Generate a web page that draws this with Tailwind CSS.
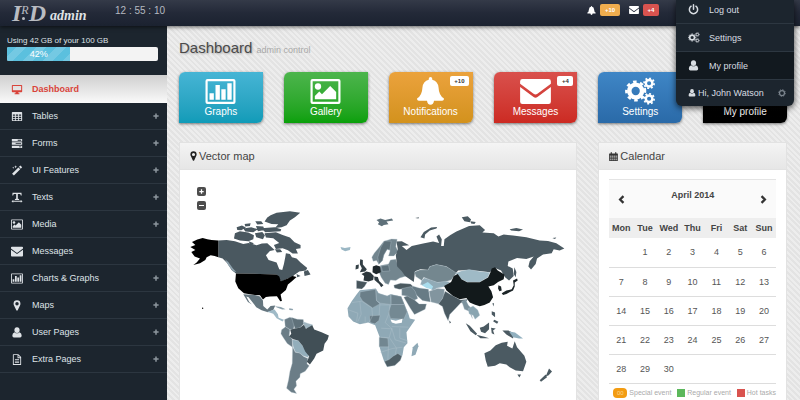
<!DOCTYPE html>
<html lang="en">
<head>
  <meta charset="UTF-8" />
  <meta name="viewport" content="width=device-width, initial-scale=1.0"/>
  <title>IRD admin - Dashboard</title>
  <script src="https://cdn.jsdelivr.net/npm/@tailwindcss/browser@4"></script>
</head>
<body class="h-screen flex flex-col overflow-hidden bg-[#1c252e] font-['Liberation_Sans',Arial,sans-serif] text-[9px] leading-3">

  <!-- icon sprite -->
  <svg class="hidden">
    <symbol id="i-desktop" viewBox="0 0 16 16"><path fill-rule="evenodd" d="M1.500 1.500h13q1 0 1 1v8.500q0 1-1 1H10v1.500h1.500V15h-7v-1.500H6V12H1.500q-1 0-1-1V2.500q0-1 1-1zM2 3v6h12V3z"/></symbol>
    <symbol id="i-table" viewBox="0 0 16 16"><path fill-rule="evenodd" d="M1.500 1.500h13q1 0 1 1v11q0 1-1 1h-13q-1 0-1-1v-11q0-1 1-1zM2 5v2h3V5zM6.300 5v2h3.400V5zM11 5v2h3V5zM2 8.200v2h3v-2zM6.300 8.200v2h3.400v-2zM11 8.200v2h3v-2zM2 11.300v2h3v-2zM6.300 11.300v2h3.400v-2zM11 11.300v2h3v-2z"/></symbol>
    <symbol id="i-tasks" viewBox="0 0 16 16"><path fill-rule="evenodd" d="M.5 1.500h15v3.600H.5zM9 2.700v1.200h5V2.700zM.5 6.300h15v3.600H.5zM6 7.500v1.200h8V7.500zM.5 11.100h15v3.600H.5zM11 12.300v1.200h3v-1.200z"/></symbol>
    <symbol id="i-magic" viewBox="0 0 16 16"><path d="M.8 12.700L10 3.500l2.700 2.700-9.200 9.200zM10.900 2.700L13 .7l2.500 2.500-2 2.200zM6 .5l.6 1.500 1.500.5-1.500.6L6 4.600l-.6-1.500L4 2.500 5.400 2zM2.500 2.500l.5 1 1 .5-1 .5-.5 1-.5-1-1-.5 1-.5z"/></symbol>
    <symbol id="i-text" viewBox="0 0 16 16"><path d="M1.500 1h13l.3 4h-1.200l-.9-2H9.200v6.800l1.800.5V11.500H5v-1.200l1.800-.5V3H3.300l-.9 2H1.200zM0 13.500L2.500 11.500v1.300h11v-1.300L16 13.500 13.500 15.500v-1.200h-11v1.200z"/></symbol>
    <symbol id="i-picture" viewBox="0 0 18 15"><path fill-rule="evenodd" d="M1.200 0h15.600Q18 0 18 1.200v12.600q0 1.200-1.200 1.200H1.200Q0 15 0 13.800V1.200Q0 0 1.200 0zM1.300 1.300v12.400h15.400V1.300z"/><circle cx="4.500" cy="4.500" r="1.900"/><path d="M2.600 12.200v-2l2.700-2.700 1.600 1.600L11.800 4.200l3.600 3.600v4.400z"/></symbol>
    <symbol id="i-envelope" viewBox="0 0 16 13"><path d="M0 2.500V1.200Q0 0 1.200 0h13.600Q16 0 16 1.200v1.300L9 7.700q-1 .8-2 0z"/><path d="M0 4.200L7 9.300q1 .8 2 0l7-5.100v7.600q0 1.200-1.200 1.200H1.200Q0 13 0 11.800z"/></symbol>
    <symbol id="i-chart" viewBox="0 0 18 15"><path fill-rule="evenodd" d="M1.200 0h15.600Q18 0 18 1.200v12.600q0 1.200-1.200 1.200H1.200Q0 15 0 13.800V1.200Q0 0 1.200 0zM1.300 1.300v12.400h15.400V1.300z"/><path d="M2.400 8.600h2.600v3.800H2.400zM6 3.600h2.600v8.800H6zM9.500 6.100h2.600v6.300H9.500zM13.100 2.600h2.600v9.800h-2.600z"/></symbol>
    <symbol id="i-marker" viewBox="0 0 11 16"><path fill-rule="evenodd" d="M5.500.5a5 5 0 0 1 5 5q0 1-.5 2L6.500 15q-1 1.200-2 0L1 7.500Q.5 6.500.5 5.500a5 5 0 0 1 5-5zM5.500 3a2.500 2.500 0 1 0 0 5 2.500 2.500 0 0 0 0-5z"/></symbol>
    <symbol id="i-user" viewBox="0 0 16 16"><ellipse cx="8" cy="4.500" rx="3.800" ry="4.300"/><path d="M4.500 7.500Q8 11 11.500 7.500q3.300.8 3.300 5 0 2.700-2.300 2.700h-9q-2.300 0-2.300-2.700 0-4.200 3.300-5z"/></symbol>
    <symbol id="i-file" viewBox="0 0 16 16"><path fill-rule="evenodd" d="M2 1q0-.8.8-.8H10L14 4.500v10.700q0 .8-.8.8H2.800q-.8 0-.8-.8zM3.300 1.500v13.200h9.400V6H8.800V1.500zM10 2v2.800h2.500zM5 7.500h6v1.100H5zM5 9.800h6v1.100H5zM5 12h6v1.100H5z"/></symbol>
    <symbol id="i-plus" viewBox="0 0 16 16"><path d="M6 1h4v5h5v4h-5v5H6v-5H1V6h5z"/></symbol>
    <symbol id="i-bell" viewBox="0 0 16 16"><path d="M8 0q1 0 1 1v.5q3.300.8 3.600 4.500.2 4.500 3 6.200.3 1.300-1 1.300h-4.600Q9.700 15.800 8 15.800T6 13.500H1.400q-1.300 0-1-1.300 2.800-1.700 3-6.200Q3.700 2.300 7 1.500V1q0-1 1-1z"/></symbol>
    <symbol id="i-cogs" viewBox="0 0 18 16">
      <g fill="none" stroke="currentColor">
        <circle cx="6.200" cy="8" r="3.700" stroke-width="2.600"/>
        <circle cx="6.200" cy="8" r="5.400" stroke-width="1.500" pathLength="16" stroke-dasharray="1 1" stroke-dashoffset=".5"/>
        <circle cx="14" cy="3.500" r="1.900" stroke-width="1.400"/>
        <circle cx="14" cy="3.500" r="2.900" stroke-width="1" pathLength="16" stroke-dasharray="1 1"/>
        <circle cx="14" cy="12.500" r="1.900" stroke-width="1.400"/>
        <circle cx="14" cy="12.500" r="2.900" stroke-width="1" pathLength="16" stroke-dasharray="1 1"/>
      </g>
    </symbol>
    <symbol id="i-power" viewBox="0 0 16 16"><path fill="none" stroke="currentColor" stroke-width="2.200" stroke-linecap="round" d="M4.500 3.200a6 6 0 1 0 7 0M8 1.200v6.300"/></symbol>
    <symbol id="i-calendar" viewBox="0 0 16 16"><path fill-rule="evenodd" d="M1 2.500h2V1q0-1 1-1t1 1v1.500h6V1q0-1 1-1t1 1v1.500h2q.8 0 .8.800v11.900q0 .8-.8.800H1q-.8 0-.8-.8V3.300q0-.8.800-.8z"/><path fill="#999" d="M1.500 6.300v2.400h2.700V6.300zM5 6.300v2.400h2.700V6.300zM8.500 6.300v2.400h2.700V6.300zM12 6.300v2.400h2.700V6.300zM1.500 9.400v2.300h2.700V9.400zM5 9.400v2.300h2.700V9.400zM8.500 9.400v2.300h2.700V9.400zM12 9.400v2.300h2.700V9.400zM1.500 12.400v2.300h2.700v-2.300zM5 12.400v2.300h2.700v-2.300zM8.500 12.400v2.300h2.700v-2.300zM12 12.400v2.300h2.700v-2.300z"/></symbol>
    <symbol id="i-left" viewBox="0 0 16 16"><path fill="none" stroke="currentColor" stroke-width="4" d="M11.500 2L5.500 8l6 6"/></symbol>
    <symbol id="i-right" viewBox="0 0 16 16"><path fill="none" stroke="currentColor" stroke-width="4" d="M4.500 2l6 6-6 6"/></symbol>
    <symbol id="i-cog" viewBox="0 0 16 16"><g fill="none" stroke="currentColor"><circle cx="8" cy="8" r="5" stroke-width="2.500"/><circle cx="8" cy="8" r="6.700" stroke-width="1.800" pathLength="16" stroke-dasharray="1 1"/></g></symbol>
  </svg>

  <header class="relative z-10 h-[26px] shrink-0 flex items-center bg-linear-to-b from-[#343a48] via-[#232938] to-[#1b2230] shadow-[0_1px_4px_rgba(0,0,0,0.6)]">
    <a href="#" class="w-[115px] pl-3 flex items-end font-['Liberation_Serif',serif] italic text-[#b9bcc2]" aria-label="IRD admin">
      <span class="text-[24px] leading-[26px] font-bold">I</span>
      <span class="flex flex-col items-center text-[12px] leading-[14px]">
        <span>R</span>
        <span class="size-[3px] mb-[6px] mr-1 rounded-full bg-current"></span>
      </span>
      <span class="text-[24px] leading-[26px] font-bold">D</span>
      <span class="text-[14px] leading-[20px] pl-1 font-bold text-[#dfe1e5]">admin</span>
    </a>
    <time class="text-[10px] pb-1 text-[#b5b9c0]">12 : 55 : 10</time>
    <div class="ml-auto mr-[141px] pb-1.5 flex items-center text-white">
      <svg class="size-[9px] fill-current"><use href="#i-bell"/></svg>
      <a href="#" class="ml-1 px-1 h-3 w-5 text-center rounded-xs bg-[#f0ad4e] text-[6px] font-bold">+10</a>
      <svg class="ml-[9px] h-2 w-[10px] fill-current"><use href="#i-envelope"/></svg>
      <a href="#" class="ml-1 h-3 w-4 text-center rounded-xs bg-[#d9534f] text-[6px] font-bold">+4</a>
    </div>

    <!-- user dropdown -->
    <nav class="absolute right-1.5 top-0 w-[118px] rounded-b-md bg-[#1c252e] text-[#d8dde2] shadow-[0_2px_6px_rgba(0,0,0,0.7)]">
      <a href="#" class="flex items-center h-6 pl-3 pb-1 border-b border-[#2d3741]"><svg class="size-[11px] mr-[10px] fill-current"><use href="#i-power"/></svg>Log out</a>
      <a href="#" class="flex items-center h-7 pl-3 border-b border-[#2d3741]"><svg class="h-[11px] w-3 mr-[9px] fill-current"><use href="#i-cogs"/></svg>Settings</a>
      <a href="#" class="flex items-center h-7 pl-3 bg-[#12191f] border-b border-[#2d3741]"><svg class="size-[11px] mr-[10px] fill-current"><use href="#i-user"/></svg>My profile</a>
      <a href="#" class="flex items-center h-[26px] px-3 pr-2"><svg class="size-2 mr-0.5 fill-current"><use href="#i-user"/></svg>Hi, John Watson<svg class="size-2 ml-auto text-[#7d868f]"><use href="#i-cog"/></svg></a>
    </nav>
  </header>

  <div class="flex flex-1 min-h-0">
    <aside class="w-[167px] shrink-0 text-[#dfe3e7]">
      <div class="px-[7px] pt-[9px] pb-[14px]">
        <label for="disk" class="block text-[8px]">Using 42 GB of your 100 GB</label>
        <div id="disk" role="progressbar" aria-valuenow="42" class="h-[14px] rounded-xs mr-0.5 bg-[#f3f3f3] overflow-hidden">
          <div class="h-full text-center text-white leading-[14px] bg-[#5bc0de] bg-[repeating-linear-gradient(135deg,#5bc0de_0_7px,#74c9e3_7px_14px)]" style="width:42%">42%</div>
        </div>
      </div>
      <nav id="menu"></nav>
    </aside>

    <main class="flex-1 min-w-0 px-3 pr-[13px] pt-[13px] flex flex-col bg-[repeating-linear-gradient(45deg,#e3e3e3_0_2px,#ededed_2px_4px)]">
      <h1 class="text-[15px] leading-[18px] text-[#4a4a4a] [text-shadow:1px_1px_2px_#aaa]">Dashboard <small class="text-[9px] text-[#a8a8a8] [text-shadow:none]">admin control</small></h1>

      <div class="mt-[13px] grid grid-cols-6 gap-x-[21px] text-[10px] text-white" id="tiles"></div>

      <div class="mt-[19px] flex-1 min-h-0 grid grid-cols-6 gap-x-[21px]">
        <section class="col-span-4 flex flex-col bg-white border border-[#e2e2e2]">
          <h2 class="h-[27px] shrink-0 px-[10px] flex items-center gap-0.5 text-[11px] text-[#444] bg-linear-to-b from-[#f4f4f4] to-[#e6e6e6] border-b border-[#e2e2e2]"><svg class="h-[10px] w-[7px] fill-[#222]"><use href="#i-marker"/></svg>Vector map</h2>
          <div class="relative flex-1">
            <div class="absolute left-[17px] top-[17px] flex flex-col gap-[5px] text-white">
              <button aria-label="Zoom in" class="size-[9px] rounded-xs bg-[#4d4d4d] flex items-center justify-center"><svg class="size-[5px] fill-current"><use href="#i-plus"/></svg></button>
              <button aria-label="Zoom out" class="size-[9px] rounded-xs bg-[#4d4d4d] flex items-center justify-center"><span class="w-[5px] h-px bg-white"></span></button>
            </div>
            <svg class="block w-full" viewBox="0 0 1190 690" role="img" aria-label="World map" stroke="#b9c8d0" stroke-width="1" stroke-linejoin="round">
              <!-- North America -->
              <g fill="#4a5860" stroke="none">
                <path d="M115 212L140 210 165 214 190 222 206 219 230 226 246 221 262 220 272 229 284 240 270 243 258 256 266 270 290 278 298 298 307 300 312 282 316 262 318 250 330 252 336 262 350 266 362 278 382 294 378 302 358 305 342 316 338 322 325 325 304 335 290 314 240 312 168 311 155 300 142 280 128 266 115 262z"/>
                <path d="M272 136L290 128 330 124 361 128 345 142 330 152 320 166 305 172 285 174 295 163 275 162 254 155 262 143z"/>
                <path d="M165 190L180 184 205 188 222 196 220 208 205 214 180 212 162 206zM170 172l16-5 12 6-14 8-12-1zM194 162l18-2-2 8-14 2zM190 176l24-4 20 6-14 9-24-2zM226 154l18 0 6 8-18 2zM228 168l22 2 4 10-20 4zM225 190l22-4 8 10-6 12-20-6zM244 175l40-3 20 6-2 6-46 3zM254 190l34-3 20 8 22 8 14 14 18 8 0 10-14 2 6 14-16 0-14-10-16-6-20 2-6-12 16-6-18-14-22-2zM206 214l16 6-10 6zM285 238l16 0 6 8-16 2zM372 305l12-5 8 14-18 4zM350 312l12 6-10 4z"/>
                <path d="M190 373L225 375 240 380 249 392 250 408 262 419 272 408 286 407 280 420 264 427 245 421 229 412 220 400 206 382 199 380 208 396 216 404 204 396z" fill="#65767f"/>
                <path d="M135 268l10 8 14 20 10 10-10-2-14-18z" fill="#8fa3ae"/>
                <path d="M262 426L284 419 294 433 296 444 312 450 308 455 290 445 280 432z" fill="#9fbac7"/>
                <path d="M285 409l18 2 14 7-10 1-16-6zM328 415l12 2-2 4-10-1z" fill="#8da2ad"/>
              </g>
              <path fill="#000" stroke="none" d="M115 212L95 210 82 208 68 204 52 209 36 216 46 225 31 231 46 240 34 246 44 260 60 266 50 278 40 285 60 280 76 270 80 262 92 256 104 258 115 262zM168 311L240 312 290 314 298 320 303 334 325 325 338 318 350 321 336 334 324 344 318 360 302 374 306 393 301 394 291 379 270 380 258 381 249 389 240 376 225 375 205 372 192 370 175 355 166 335z"/>
              <circle cx="68" cy="415" r="2" fill="#000" stroke="none"/>
              <!-- South America -->
              <g fill="#6b7d87">
                <path d="M314 449L330 442 342 447 345 460 340 480 328 478 316 470z"/>
                <path d="M335 443L352 448 370 449 372 462 360 474 345 476 340 460z" fill="#5f717a"/>
                <path d="M370 456L385 461 398 465 394 476 375 474z" fill="#9fb5c0"/>
                <path d="M305 480L317 471 330 480 328 497 337 508 338 532 322 521 310 503 303 492z"/>
                <path d="M337 510L355 512 368 528 384 550 386 563 370 558 360 550 346 546 340 530z" fill="#93aebb"/>
                <path d="M338 531L346 547 360 550 371 560 384 566 381 582 388 588 376 604 361 612 360 622 348 634 350 648 342 658 350 671 334 667 320 655 326 630 330 605 337 580z"/>
                <path d="M331 480L345 476 360 474 372 465 378 477 397 466 403 479 425 487 447 497 443 510 434 522 430 542 410 552 403 566 390 584 381 576 388 560 376 545 368 528 355 512 340 508 328 500 334 492z" fill="#414f56" stroke="none"/>
              </g>
              <!-- Europe -->
              <g fill="#73868f">
                <path d="M482 231L495 234 512 231 510 240 496 244 485 239z" fill="#9bb7c4" stroke="none"/>
                <path d="M590 150l12-4 14 4 20-4 4 6-20 3 6 8-14 2-6 4-12-6 4-6z" fill="#5f717a" stroke="none"/>
                <path d="M576 262L583 250 598 232 612 214 635 207 652 208 648 230 655 245 642 258 626 258 631 242 622 238 612 255 608 272 597 283 590 272 580 274z"/>
                <path d="M614 213L634 214 630 240 622 238 612 255 608 272 597 283 594 262 603 232z" fill="#5e7079"/>
                <path d="M541 268l8 2 0 14 12 14-5 7-16 2 6-12-6-12zM528 286l9-2-1 12-9 3z" fill="#333f45" stroke="none"/>
                <path d="M602 287L626 282 632 270 648 268 655 290 678 305 680 318 660 324 648 332 632 330 626 344 616 340 604 322 598 308z"/>
                <path d="M604 288l22-3 4 18-22 2z" fill="#5f727c"/>
                <path d="M545 312L560 305 572 308 582 318 580 330 566 335 551 332 553 318z" fill="#2c373c" stroke="none"/>
                <path d="M579 290l10-4 12 4 2 17-14 6-11-6z" fill="#1e272b" stroke="none"/>
                <path d="M530 332L562 337 554 350 546 357 530 356z" fill="#47555c"/>
                <path d="M583 320l11 1 4 12 13 13-7 6-6-10-14-12z" fill="#303c42" stroke="none"/>
                <path d="M642 346l20-6 30 2 8 8-12 6-30 2-14-4z" fill="#4a5960"/>
              </g>
              <!-- Africa -->
              <g fill="#8fa9b6">
                <path d="M515 395L530 374 540 361 588 356 596 370 622 378 632 373 664 380 672 400 685 430 690 446 706 450 692 470 680 487 683 520 672 532 668 556 645 585 622 591 612 572 604 548 599 530 602 508 592 482 586 466 565 458 540 463 520 455 506 440 503 415z" stroke="none"/>
                <path d="M541 366L588 358 590 392 600 402 578 414 548 393 540 380z" fill="#6b7f89"/>
                <path d="M588 358l8 12 26 8 10-4 2 30-32-4-12-8z" fill="#8097a2"/>
                <path d="M634 374l30 6 10 24-40 0z" fill="#6f838d"/>
                <path d="M634 404l40 0 8 22-10 22-40-2-6-20z" fill="#748993"/>
                <path d="M569 438l32-2-4 16-12 10-14-4z" fill="#677a84"/>
                <path d="M598 502l26 3 2 26-28 0z" fill="#728791"/>
                <path d="M614 575l14-6 12-10 14-8 12 8-4 12-17 16-23 4z" fill="#4f5f67"/>
                <path d="M600 405l30 0-2 25-12 28 20 18-8 28-25-2M516 398l30-4 30 20 2 24-10 20M530 455l4-25-28-10M540 395l4 38-10 22M600 402l-2 34M556 440l0 22M636 470l50 2M636 476l10 34 34 10M630 505l20 30-4 20M600 548l38-12 30-4M660 475l0 30 24 8M626 530l-2 40M604 475l34 2" fill="none"/>
                <path d="M632 449l16 4 20-6-2 12-18 3-12-4z" fill="#fff" stroke="none"/>
                <path d="M699 532l14-13 3 10-9 26-12 4z" stroke="none"/>
              </g>
              <!-- Asia and Oceania -->
              <g transform="translate(600 0)" fill="#4b5a62">
                <path stroke="none" d="M48 256L54 238 50 215 66 214 88 226 66 228 80 240 96 228 130 221 160 215 178 219 170 200 178 194 186 208 184 228 192 228 194 208 212 195 230 185 268 168 300 166 316 180 308 188 342 190 356 200 372 194 400 197 440 202 480 212 505 213 530 220 554 236 540 242 522 238 516 250 490 254 472 266 468 282 454 299 446 290 450 274 462 260 440 267 412 264 386 275 384 288 399 296 402 318 388 332 376 322 364 302 346 294 330 307 300 303 265 300 235 302 228 310 200 290 170 284 150 290 145 300 122 298 106 304 104 318 102 336 76 318 66 304 52 290z"/>
                <path stroke="none" d="M122 202l10-16 22-13 18-2-2 5-20 6-14 12-2 12zM246 142l18-3 10 10-4 8-16-3zM272 154l16 2-4 6-10-1zM390 178l20-4 20 5-12 5-24-2zM106 144l12-2-2 4zM518 204l12-1-4 4zM404 292l6 14-2 16-6-10z"/>
                <path fill="#74878f" d="M104 306L120 300 145 300 150 290 170 284 200 290 230 309 214 330 194 336 172 338 150 330 132 322 126 332 108 320z"/>
                <path fill="#91aab6" d="M126 332l8-8 18 6 22 8 22-4 14 2-14 14-24 4-12 8-20-14-18-4z"/>
                <path fill="#a9dcec" stroke="none" d="M126 346l18-10 16 14-4 8-16-4z"/>
                <path fill="#677b85" d="M98 348l20 6 28 4 6 38-24-4-20-18-14-14z"/>
                <path fill="#82959f" d="M148 364l26-8 20 2-2 20-14 24-24-6z"/>
                <path fill="#6f838d" d="M66 356l28-6 12 14 8 22-12 6-22-14-14-2z"/>
                <path fill="#5e7079" d="M72 382l10-4 22 12 14 12 22 0-4 16-32 16-12-18z"/>
                <path fill="#9fbac6" d="M228 310L246 303 268 299 300 305 330 308 324 322 300 336 262 336 240 325z"/>
                <path fill="#4b5a62" d="M196 364L220 378 242 390 264 388 254 402 244 398 228 415 210 434 205 453 194 430 188 410 176 402 188 386z"/>
                <path fill="#12191b" stroke="none" d="M193 348L214 336 222 318 234 312 245 328 262 337 300 337 325 323 332 308 336 296 346 292 354 302 374 314 372 328 355 336 342 346 326 350 335 364 340 382 330 398 314 405 300 409 284 404 270 398 260 384 240 388 220 378 200 362z"/>
                <path fill="#7c929d" d="M246 394l12-4 8 16 12 12-4 8 4 20-10-22-14-6z"/>
                <path fill="#8aa5b1" d="M266 416l14-8 14 12 6 16-14 12-6-12-12-4z"/>
                <path stroke="none" d="M208 452l6 5-4 4zM258 460l12 8 22 24-4 4-16-12zM290 495l24 6 14 4-26 0zM300 474l12-4 16-12 0 20-12 12-12-4zM334 474l14 2-8 6 4 12-8-4zM338 400l5 0-2 10zM336 424l10 4 0 14-10-8zM344 450l12 6-4 6-12-8zM368 482l18 0 16 8-2 16-20-12z"/>
                <path stroke="none" fill="#91b0bf" d="M388 485l18 3 24 18-12 0-18-4z"/>
                <path stroke="none" fill="#1b2427" d="M366 370l14-8 16-4 6-12-2-14 12-6 2 6-9 6 0 12-5 12-20 10-10 3zM356 346l8 4 2 12-7 2-4-8z"/>
                <path stroke="none" d="M314 550L332 542 348 526 366 519 384 516 382 528 398 536 405 514 412 532 434 558 440 576 430 604 408 602 390 592 380 584 360 580 346 588 324 591 318 572zM413 614l11 0-5 9zM508 596l9 9-10 11-9 4 4-10zM498 614l4 8-18 14-4-5z"/>
              </g>
            </svg>
          </div>
        </section>

        <section class="col-span-2 bg-white border border-[#e2e2e2]">
          <h2 class="h-[27px] px-[10px] flex items-center gap-0.5 text-[11px] text-[#444] bg-linear-to-b from-[#f4f4f4] to-[#e6e6e6] border-b border-[#e2e2e2]"><svg class="size-[9px] fill-[#333]"><use href="#i-calendar"/></svg>Calendar</h2>
          <div class="px-[10px] pt-[9px]">
            <div class="h-[39px] px-2 flex items-center justify-between bg-[#fafafa] border-t border-[#e4e4e4] text-[#333]">
              <button aria-label="Previous month"><svg class="size-[9px]"><use href="#i-left"/></svg></button>
              <strong class="pb-2 text-[#444]">April 2014</strong>
              <button aria-label="Next month"><svg class="size-[9px]"><use href="#i-right"/></svg></button>
            </div>
            <table class="w-full table-fixed text-center text-[#555]">
              <thead class="bg-[#eee] text-[#444]"><tr class="h-5"><th>Mon</th><th>Tue</th><th>Wed</th><th>Thu</th><th>Fri</th><th>Sat</th><th>Sun</th></tr></thead>
              <tbody id="days"></tbody>
            </table>
            <div class="mt-1 pl-1 flex items-center justify-between text-[7px] leading-[10px] text-[#aaa] whitespace-nowrap">
              <span class="flex items-center gap-0.5"><i class="h-[10px] w-[14px] rounded-sm bg-[#f39c12] text-center not-italic text-[6px] text-[#fcd58f]">00</i>Special event</span>
              <span class="flex items-center gap-0.5"><i class="size-2 bg-[#5cb85c]"></i>Regular event</span>
              <span class="flex items-center gap-0.5"><i class="size-2 bg-[#d9534f]"></i>Hot tasks</span>
            </div>
          </div>
        </section>
      </div>
    </main>
  </div>

  <script>
    // sidebar
    const menu = [
      ['desktop', 'Dashboard'], ['table', 'Tables', 1], ['tasks', 'Forms', 1], ['magic', 'UI Features', 1],
      ['text', 'Texts', 1], ['picture', 'Media', 1], ['envelope', 'Messages'], ['chart', 'Charts & Graphs', 1],
      ['marker', 'Maps', 1], ['user', 'User Pages', 1], ['file', 'Extra Pages', 1]
    ];
    document.getElementById('menu').innerHTML = menu.map(([icon, label, sub], i) => `
      <a href="#" class="flex items-center pl-[11px] pr-2 ${i === 0
        ? 'h-7 bg-linear-to-b from-[#cfcfcf] to-[#fafafa] text-[#d9433a] font-bold'
        : 'h-[27px] border-b border-[#2c3640]'}">
        <svg class="h-[11px] w-3 mr-[9px] fill-current"><use href="#i-${icon}"/></svg>
        <span class="flex-1">${label.replace('&', '&amp;')}</span>
        ${sub ? '<svg class="size-[6px] fill-[#8d969e]"><use href="#i-plus"/></svg>' : ''}
      </a>`).join('');

    // shortcut tiles
    const tiles = [
      ['chart', 'Graphs', 'from-[#45b5d5] to-[#0f9bb8]'],
      ['picture', 'Gallery', 'from-[#4cb54c] to-[#08a008]'],
      ['bell', 'Notifications', 'from-[#eba23c] to-[#d3921c]', '+10'],
      ['envelope', 'Messages', 'from-[#d9504c] to-[#cc2a22]', '+4'],
      ['cogs', 'Settings', 'from-[#3f86c6] to-[#2a6aa8]'],
      ['user', 'My profile', 'from-[#333] to-[#000]']
    ];
    document.getElementById('tiles').innerHTML = tiles.map(([icon, label, color, badge]) => `
      <a href="#" class="relative h-[51px] pt-[5px] flex flex-col items-center rounded-tl-md rounded-br-md bg-linear-to-b ${color} shadow-[0_1px_3px_rgba(0,0,0,0.5)]">
        <span class="h-7 flex items-center"><svg class="w-[31px] fill-current ${icon === 'bell' || icon === 'cogs' ? 'h-7' : 'h-[25px]'}"><use href="#i-${icon}"/></svg></span>
        <span class="mt-px">${label}</span>
        ${badge ? `<span class="absolute right-1 top-1 h-[10px] min-w-4 px-1 rounded-xs bg-white text-center text-[6px] leading-[10px] font-bold text-[#333]">${badge}</span>` : ''}
      </a>`).join('');

    // April 2014 starts on a Tuesday
    let rows = '';
    for (let w = 0; w < 5; w++) {
      rows += '<tr class="h-[29px] border-b border-[#ddd]">';
      for (let d = 0; d < 7; d++) {
        const n = w * 7 + d;
        rows += `<td>${n > 0 && n <= 30 ? n : ''}</td>`;
      }
      rows += '</tr>';
    }
    document.getElementById('days').innerHTML = rows;
  </script>
</body>
</html>
